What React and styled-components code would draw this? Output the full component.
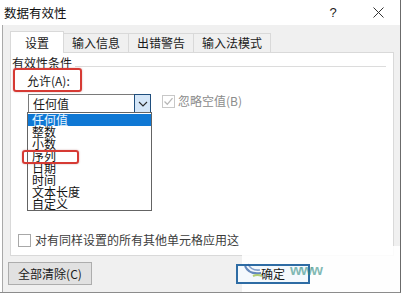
import React from "react";
import styled, { createGlobalStyle } from "styled-components";

const GlobalStyle = createGlobalStyle`
  html, body {
    margin: 0;
    padding: 0;
    background: #fff;
  }
  body {
    font-family: "Noto Sans CJK SC", "Liberation Sans", sans-serif;
    font-size: 12px;
    color: #1a1a1a;
  }
`;

const Dialog = styled.div`
  position: relative;
  width: 400px;
  height: 292px;
  border-right: 1px solid #6b6b6b;
  border-bottom: 1px solid #8c8c8c;
  display: flex;
  flex-direction: column;
  overflow: hidden;
`;

const TitleBar = styled.div`
  height: 25px;
  flex: none;
  display: flex;
  align-items: center;
  padding-left: 4px;
  background: #fff;
`;

const Title = styled.span`
  font-size: 12.5px;
  line-height: 14px;
  color: #111;
`;

const Controls = styled.div`
  margin-left: auto;
  display: flex;
  align-items: center;
  gap: 25px;
  padding-right: 12px;
`;

const TitleButton = styled.span`
  width: 20px;
  display: flex;
  justify-content: center;
  align-items: center;
  font-family: "Liberation Sans", sans-serif;
  font-size: 13px;
  color: #222;
`;

const Body = styled.div`
  flex: 1;
  display: flex;
  flex-direction: column;
  background: #f0f0f0;
  margin-left: 2px;
  border-left: 1px solid #a9a9a9;
`;

const TabRow = styled.div`
  height: 27px;
  display: flex;
  align-items: flex-end;
  margin: 0 6px 0 7px;
`;

const Tab = styled.div`
  box-sizing: border-box;
  display: flex;
  align-items: center;
  justify-content: center;
  border: 1px solid #d9d9d9;
  border-bottom: none;
  line-height: 14px;
  height: ${(p) => (p.$active ? "22px" : "19px")};
  padding: ${(p) => (p.$active ? "0 14px" : "0 8px")};
  background: ${(p) => (p.$active ? "#fff" : "#f0f0f0")};
  margin-bottom: ${(p) => (p.$active ? "-1px" : "0")};
  margin-left: -1px;
  position: relative;
  z-index: ${(p) => (p.$active ? 2 : 1)};
  &:first-child {
    margin-left: 0;
  }
`;

const Panel = styled.div`
  position: relative;
  box-sizing: border-box;
  height: 204px;
  margin: 0 6px 0 7px;
  background: #fff;
  border: 1px solid #d9d9d9;
  display: flex;
  flex-direction: column;
`;

const GroupHeader = styled.div`
  display: flex;
  align-items: flex-start;
  margin-top: 3px;
  padding-left: 1px;
  line-height: 14px;
`;

const GroupLine = styled.div`
  flex: 1;
  height: 1px;
  background: #dcdcdc;
  margin: 10px 7px 0 3px;
`;

const FieldLabel = styled.div`
  margin-top: 4px;
  padding-left: 16px;
  line-height: 14px;
`;

const FieldRow = styled.div`
  display: flex;
  align-items: flex-start;
  margin-top: 6px;
  padding-left: 17px;
`;

const Select = styled.div`
  box-sizing: border-box;
  width: 123px;
  height: 19px;
  display: flex;
  align-items: stretch;
  border: 1px solid #7a7a7a;
  background: #fff;
`;

const SelectValue = styled.span`
  flex: 1;
  padding-left: 4px;
  line-height: 17px;
`;

const SelectButton = styled.span`
  box-sizing: border-box;
  width: 17px;
  margin: -1px -1px -1px 0;
  border: 1px solid #1f4e7d;
  background: #d4e6f8;
  display: flex;
  align-items: center;
  justify-content: center;
`;

const CheckWrap = styled.label`
  display: flex;
  align-items: center;
  gap: ${(p) => p.$gap || 3}px;
  margin-left: ${(p) => p.$offset || 0}px;
  color: ${(p) => (p.$disabled ? "#8c8c8c" : "#3c3c3c")};
  line-height: 14px;
`;

const Box = styled.span`
  box-sizing: border-box;
  width: 13px;
  height: 13px;
  border: 1px solid ${(p) => (p.$disabled ? "#c8c8c8" : "#a8a8a8")};
  background: #fff;
  display: flex;
  align-items: center;
  justify-content: center;
`;

const List = styled.div`
  position: absolute;
  left: 16px;
  top: 59px;
  box-sizing: border-box;
  width: 125px;
  height: 99px;
  padding-top: 1px;
  border: 1px solid #646464;
  background: #fff;
  z-index: 3;
`;

const ListItem = styled.div`
  height: 12px;
  line-height: 12px;
  padding-left: 4px;
  font-size: 12px;
  background: ${(p) => (p.$selected ? "#0f78d4" : "transparent")};
  color: ${(p) => (p.$selected ? "#eaf6ff" : "#111")};
`;

const BottomRow = styled.div`
  margin-top: auto;
  margin-bottom: 8px;
  padding-left: 7px;
`;

const Footer = styled.div`
  display: flex;
  align-items: flex-start;
  padding: 6px 0 0 5px;
`;

const Button = styled.div`
  box-sizing: border-box;
  height: ${(p) => (p.$primary ? "20px" : "23px")};
  width: ${(p) => p.$width}px;
  margin-top: ${(p) => (p.$primary ? "2px" : "0")};
  margin-left: ${(p) => p.$offset || 0}px;
  display: flex;
  align-items: center;
  justify-content: center;
  border: ${(p) => (p.$primary ? "2px solid #2e6ca4" : "1px solid #adadad")};
  background: ${(p) => (p.$primary ? "#f4f9fd" : "#e1e1e1")};
  line-height: 14px;
  position: relative;
  z-index: 5;
`;

const Fade = styled.div`
  position: absolute;
  left: 242px;
  top: 246px;
  right: 0;
  bottom: 0;
  background: rgba(255, 255, 255, 0.88);
  z-index: 4;
`;

const Mark = styled.div`
  position: absolute;
  left: 243px;
  top: 261px;
  z-index: 6;
  display: flex;
  align-items: flex-end;
  pointer-events: none;
`;

const MarkText = styled.span`
  margin-left: 27px;
  font-family: "Liberation Sans", sans-serif;
  font-size: 15px;
  font-weight: bold;
  letter-spacing: -1px;
  color: rgba(46, 140, 130, 0.6);
`;

const Annotation = styled.div`
  position: absolute;
  left: ${(p) => p.$x}px;
  top: ${(p) => p.$y}px;
  width: ${(p) => p.$w}px;
  height: ${(p) => p.$h}px;
  box-sizing: border-box;
  border: 2.5px solid #d63a34;
  border-radius: 3px;
  box-shadow: 0 0 2px rgba(120, 20, 20, 0.35);
  z-index: 8;
`;

const options = ["任何值", "整数", "小数", "序列", "日期", "时间", "文本长度", "自定义"];
const tabs = ["设置", "输入信息", "出错警告", "输入法模式"];

const CheckMark = ({ color }) => (
  <svg width="11" height="11" viewBox="0 0 11 11">
    <path d="M1.5 5.5 L4.3 8.3 L9.5 2.2" fill="none" stroke={color} strokeWidth="1.3" />
  </svg>
);

const Checkbox = ({ label, checked, disabled, gap, offset }) => (
  <CheckWrap $disabled={disabled} $gap={gap} $offset={offset}>
    <Box $disabled={disabled}>{checked && <CheckMark color="#b8b8b8" />}</Box>
    {label}
  </CheckWrap>
);

export default function App() {
  return (
    <>
      <GlobalStyle />
      <Dialog>
        <TitleBar>
          <Title>数据有效性</Title>
          <Controls>
            <TitleButton>?</TitleButton>
            <TitleButton>
              <svg width="11" height="11" viewBox="0 0 11 11">
                <path d="M0.5 0.5 L10.5 10.5 M10.5 0.5 L0.5 10.5" stroke="#333" strokeWidth="1" />
              </svg>
            </TitleButton>
          </Controls>
        </TitleBar>
        <Body>
          <TabRow>
            {tabs.map((t, i) => (
              <Tab key={t} $active={i === 0}>
                {t}
              </Tab>
            ))}
          </TabRow>
          <Panel>
            <GroupHeader>
              有效性条件
              <GroupLine />
            </GroupHeader>
            <FieldLabel>允许(A):</FieldLabel>
            <FieldRow>
              <Select>
                <SelectValue>任何值</SelectValue>
                <SelectButton>
                  <svg width="10" height="6" viewBox="0 0 10 6">
                    <path d="M1 1 L5 5 L9 1" fill="none" stroke="#2a2a2a" strokeWidth="1.1" />
                  </svg>
                </SelectButton>
              </Select>
              <Checkbox label="忽略空值(B)" checked disabled offset={11} />
            </FieldRow>
            <List>
              {options.map((o, i) => (
                <ListItem key={o} $selected={i === 0}>
                  {o}
                </ListItem>
              ))}
            </List>
            <BottomRow>
              <Checkbox label="对有同样设置的所有其他单元格应用这" gap={4} />
            </BottomRow>
          </Panel>
          <Footer>
            <Button $width={84}>全部清除(C)</Button>
            <Button $primary $width={74} $offset={144}>
              确定
            </Button>
          </Footer>
        </Body>
        <Fade />
        <Mark>
          <svg width="20" height="16" viewBox="0 0 20 16">
            <path d="M2 4 Q6 13 18 11" fill="none" stroke="rgba(40,90,160,0.7)" strokeWidth="2" />
            <path d="M5 2 Q8 9 17 8" fill="none" stroke="rgba(40,90,160,0.55)" strokeWidth="1.5" />
            <path d="M10 14 Q14 12 19 14" fill="none" stroke="rgba(150,190,60,0.7)" strokeWidth="2" />
          </svg>
          <MarkText>www</MarkText>
        </Mark>
        <Annotation $x={13} $y={68} $w={69} $h={24} />
        <Annotation $x={22} $y={150} $w={57} $h={14} />
      </Dialog>
    </>
  );
}
